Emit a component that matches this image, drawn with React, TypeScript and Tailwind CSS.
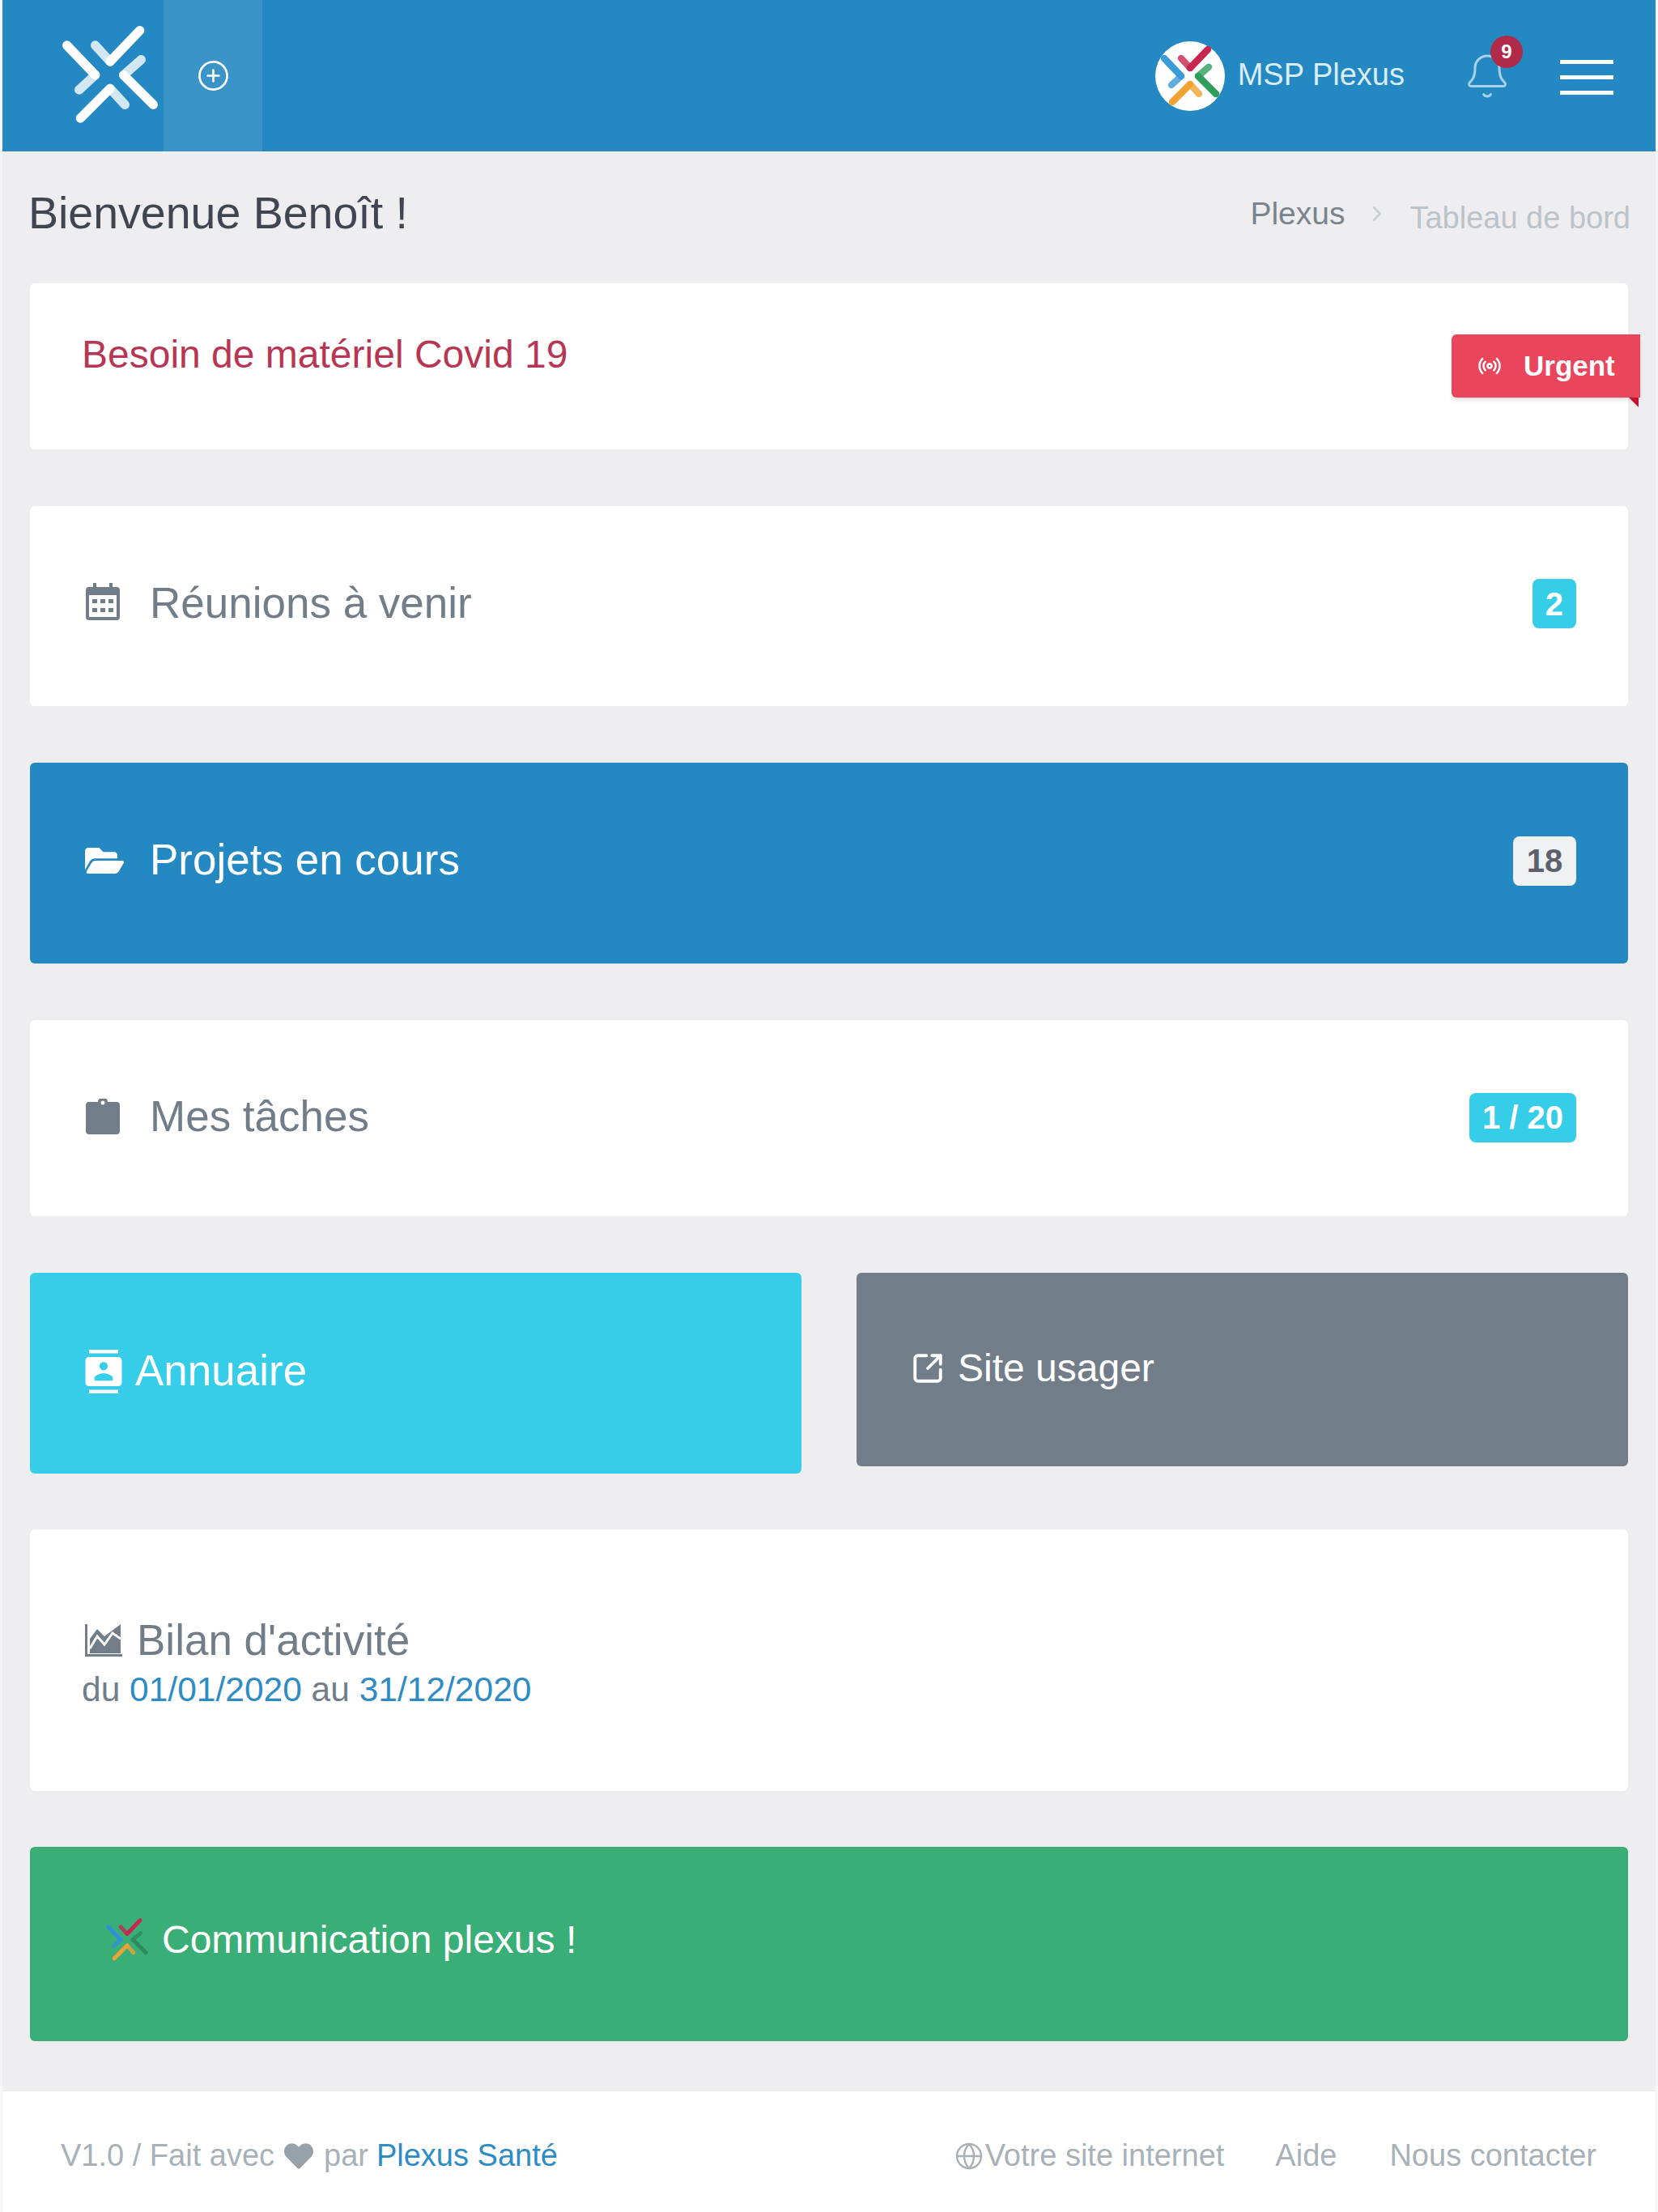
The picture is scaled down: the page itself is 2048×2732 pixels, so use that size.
import { Bell, ChevronRight, CirclePlus, Globe, Radio, SquareArrowOutUpRight } from "lucide-react";
import { FaFolderOpen, FaHeart } from "react-icons/fa";
import { MdContacts } from "react-icons/md";

function PlexusMark({ colors, width, weight = 34, className = "" }: { colors: string[]; width: number; weight?: number; className?: string }) {
  return (
    <svg viewBox="225 100 360 370" width={width} height={(width * 370) / 360} fill="none" className={className} strokeWidth={weight} strokeLinecap="round" strokeLinejoin="round">
      <path d="M405 235 350 175" stroke={colors[0]} strokeOpacity="0.8" />
      <path d="M455 285 520 228" stroke={colors[1]} strokeOpacity="0.8" />
      <path d="M405 335 460 395" stroke={colors[2]} strokeOpacity="0.8" />
      <path d="M350 285 290 340" stroke={colors[3]} strokeOpacity="0.8" />
      <path d="M515 120 405 235" stroke={colors[0]} />
      <path d="M565 395 455 285" stroke={colors[1]} />
      <path d="M295 445 405 335" stroke={colors[2]} />
      <path d="M245 175 350 285" stroke={colors[3]} />
    </svg>
  );
}

const brand = ["#c8264f", "#2f9e5c", "#f0a232", "#3b9ad8"];

function CalendarIcon({ className = "" }: { className?: string }) {
  return (
    <svg viewBox="0 0 42 46" width="42" height="46" fill="#727d8a" className={className}>
      <path d="M9 0h4v5h16V0h4v5h5a4 4 0 0 1 4 4v33a4 4 0 0 1-4 4H4a4 4 0 0 1-4-4V9a4 4 0 0 1 4-4h5zM4 15v27h34V15z" />
      <path d="M8 20h6v5H8zM18 20h6v5h-6zM28 20h6v5h-6zM8 31h6v5H8zM18 31h6v5h-6zM28 31h6v5h-6z" />
    </svg>
  );
}

function ClipboardIcon({ className = "" }: { className?: string }) {
  return (
    <svg viewBox="0 0 42 44" width="42" height="44" fill="#727d8a" className={className}>
      <path d="M4 4h11a6 6 0 0 1 12 0h11a4 4 0 0 1 4 4v32a4 4 0 0 1-4 4H4a4 4 0 0 1-4-4V8a4 4 0 0 1 4-4z" />
      <circle cx="21" cy="5" r="2.500" fill="#fff" />
    </svg>
  );
}

function Badge({ label, light }: { label: string; light?: boolean }) {
  return (
    <span className={`flex h-[61px] items-center justify-center rounded-lg px-4 text-[40px] font-bold ${light ? "bg-[#f0f1f3] text-[#5b626b] min-w-[78px]" : "bg-[#36cde8] text-white min-w-[54px]"}`}>
      {label}
    </span>
  );
}

export default function App() {
  return (
    <div className="flex min-h-[2732px] flex-col bg-[#f6f6f8] px-[3px] font-['Liberation_Sans',Arial,sans-serif]">
      <header className="flex h-[187px] items-stretch bg-[#2488c2] text-white">
        <div className="flex w-[199px] items-center justify-end pr-[6px]">
          <PlexusMark colors={["#fff", "#fff", "#fff", "#fff"]} width={120} className="-mt-[1px]" />
        </div>
        <div className="flex w-[122px] items-center justify-center bg-white/10">
          <CirclePlus size={41} strokeWidth={1.6} />
        </div>
        <div className="ml-auto flex items-center">
          <div className="flex h-[86px] w-[86px] items-center justify-center rounded-full bg-white">
            <PlexusMark colors={brand} width={72} weight={42} />
          </div>
          <span className="mb-[2px] ml-4 text-[38px] text-[#d9edf8]">MSP Plexus</span>
          <div className="relative ml-[72px]">
            <Bell size={60} strokeWidth={1.2} className="text-[#a9d2ea]" />
            <span className="absolute -right-[14px] -top-[20px] flex h-10 w-10 items-center justify-center rounded-full bg-[#b02a4a] text-2xl font-bold">9</span>
          </div>
          <div className="ml-[60px] mr-[52px] mt-[4px] flex w-[66px] flex-col gap-[14px]">
            <span className="h-[5px] bg-white" />
            <span className="h-[5px] bg-white" />
            <span className="h-[5px] bg-white" />
          </div>
        </div>
      </header>

      <main className="flex-1 bg-[#eeeef0] px-[34px]">
        <div className="flex h-[163px] items-center justify-between pb-[10px]">
          <h1 className="-ml-[2px] text-[55.500px] text-[#3f4652]">Bienvenue Benoît !</h1>
          <div className="-mr-[3px] flex items-center">
            <span className="mt-[2px] text-[39px] text-[#7a848d]">Plexus</span>
            <ChevronRight size={30} className="mx-[25px] text-[#c9ced3]" />
            <span className="mt-[12px] text-[38px] text-[#bcc3c9]">Tableau de bord</span>
          </div>
        </div>

        <section className="relative mb-[70px] h-[205px] rounded-md bg-white px-16 pt-[52px] text-[48px] text-[#b73654]">
          Besoin de matériel Covid 19
          <div className="absolute -right-[15px] top-[63px] flex h-[78px] w-[233px] items-center rounded-l-md bg-[#e9465d] pl-[32px] text-[35px] font-bold text-white shadow-md">
            <Radio size={30} strokeWidth={2} className="mr-[27px]" />
            Urgent
            <span className="absolute -bottom-[12px] right-[2px] h-0 w-0 border-r-[12px] border-b-[12px] border-r-[#c0152f] border-b-transparent" />
          </div>
        </section>

        <section className="mb-[70px] flex h-[247px] items-center rounded-md bg-white pb-[6px] pl-[69px] pr-16 text-[53px] text-[#727d8a]">
          <CalendarIcon className="-mt-[5px]" />
          <span className="-mt-[2px] ml-[37px]">Réunions à venir</span>
          <span className="ml-auto"><Badge label="2" /></span>
        </section>

        <section className="mb-[70px] flex h-[248px] items-center rounded-md bg-[#2488c2] pb-[6px] pl-[68px] pr-16 text-[53px] text-white">
          <FaFolderOpen size={48} />
          <span className="-mt-[2px] ml-[32px]">Projets en cours</span>
          <span className="ml-auto"><Badge label="18" light /></span>
        </section>

        <section className="mb-[70px] flex h-[242px] items-center rounded-md bg-white pb-[2px] pl-[69px] pr-16 text-[53px] text-[#727d8a]">
          <ClipboardIcon className="-mt-[3px]" />
          <span className="-mt-[2px] ml-[37px]">Mes tâches</span>
          <span className="ml-auto"><Badge label="1 / 20" /></span>
        </section>

        <div className="mb-[69px] grid grid-cols-2 items-start gap-[68px]">
          <section className="flex h-[248px] items-center rounded-md bg-[#36cde8] pb-[4px] pl-[64px] text-[53px] text-white">
            <MdContacts size={54} />
            <span className="-mt-[2px] ml-[12px]">Annuaire</span>
          </section>
          <section className="flex h-[239px] items-center rounded-md bg-[#727d8a] pl-[67px] pb-[4px] text-[48px] text-white">
            <SquareArrowOutUpRight size={42} strokeWidth={2.2} />
            <span className="ml-[16px]">Site usager</span>
          </section>
        </div>

        <section className="mb-[69px] h-[323px] rounded-md bg-white pl-[64px] pt-[105px] text-[#727d8a]">
          <div className="flex items-center text-[53px] leading-[64px]">
            <svg viewBox="0 0 46 40" width="46" height="40" className="ml-[4px] mr-[18px]" fill="#727d8a">
              <path d="M0 0h3v37h43v3H0z" />
              <path d="M6 36V18L15 6l9 9L44 0v36z" />
              <path d="M6 30 15 15 24 25 34 11 44 18" fill="none" stroke="#fff" strokeWidth="3" />
            </svg>
            Bilan d'activité
          </div>
          <div className="-mt-[1px] text-[42.500px] leading-[60px]">
            du <span className="text-[#2e8bc4]">01/01/2020</span> au <span className="text-[#2e8bc4]">31/12/2020</span>
          </div>
        </section>

        <section className="flex h-[240px] items-center rounded-md bg-[#39ae77] pb-[10px] pl-[94px] text-[48px] text-white">
          <PlexusMark colors={["#c8264f", "#2e8a5c", "#f0a232", "#2f8fd8"]} width={52} />
          <span className="ml-[17px]">Communication plexus !</span>
        </section>
      </main>

      <footer className="flex h-[149px] items-center justify-between bg-white pl-[72px] pr-[73px] pt-[10px] text-[38px] text-[#a9b1b8]">
        <div className="flex items-center">
          V1.0 / Fait avec
          <FaHeart size={36} className="ml-[12px] mr-[13px] text-[#98a1a9]" />
          par
          <span className="ml-[10px] text-[#2e8bc4]">Plexus Santé</span>
        </div>
        <div className="flex items-center">
          <Globe size={36} strokeWidth={1.6} />
          <span className="ml-[2px]">Votre site internet</span>
          <span className="ml-[63px]">Aide</span>
          <span className="ml-[65px]">Nous contacter</span>
        </div>
      </footer>
    </div>
  );
}
